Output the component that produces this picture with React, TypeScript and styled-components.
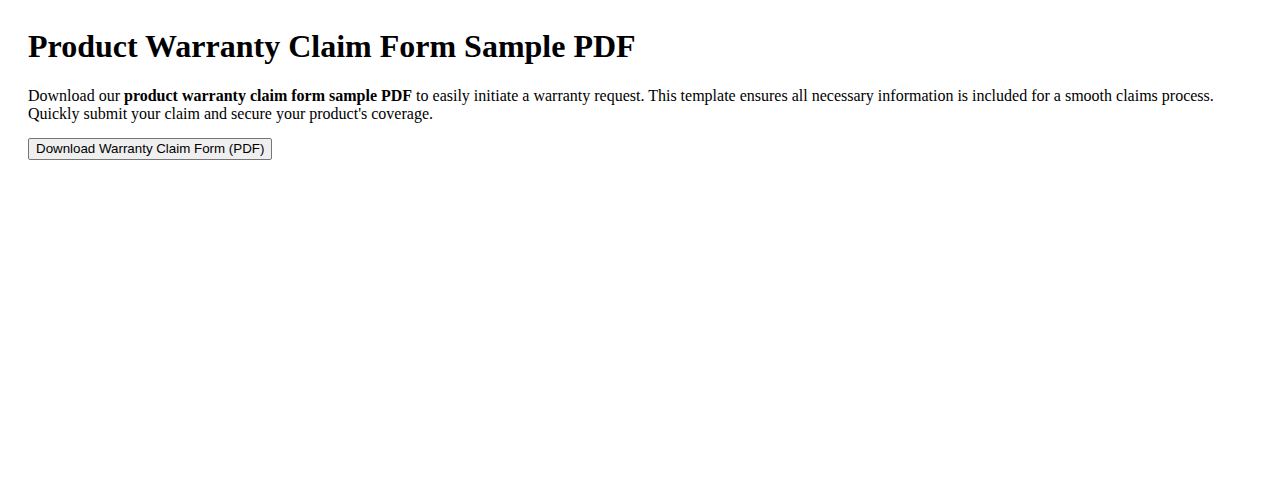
import styled, { createGlobalStyle } from "styled-components";

const GlobalStyle = createGlobalStyle`
  body {
    margin: 8px;
    font-family: "Liberation Serif", "Times New Roman", serif;
    color: #000;
    background: #fff;
  }
`;

const Page = styled.main`
  padding: 20px;
`;

const Title = styled.h1`
  margin: 0 0 0.67em;
  font-size: 32px;
  font-weight: bold;
`;

const Intro = styled.p`
  margin: 0 0 15px;
  padding-top: 1px;
  font-size: 16px;
  line-height: normal;
`;

const DownloadButton = styled.button`
  font-family: "Liberation Sans", Arial, sans-serif;
  font-size: 13.33px;
  line-height: 16px;
  padding: 2px 7px;
  color: #000;
  background: #efefef;
  border: 1px solid #767676;
  border-radius: 2px;
  cursor: pointer;
  &:hover {
    background: #e5e5e5;
  }
`;

const App = () => {
  return (
    <>
      <GlobalStyle />
      <Page>
        <Title>Product Warranty Claim Form Sample PDF</Title>
        <Intro>
          Download our <strong>product warranty claim form sample PDF</strong> to
          easily initiate a warranty request. This template ensures all
          necessary information is included for a smooth claims process.
          Quickly submit your claim and secure your product's coverage.
        </Intro>
        <DownloadButton type="button">
          Download Warranty Claim Form (PDF)
        </DownloadButton>
      </Page>
    </>
  );
};

export default App;
